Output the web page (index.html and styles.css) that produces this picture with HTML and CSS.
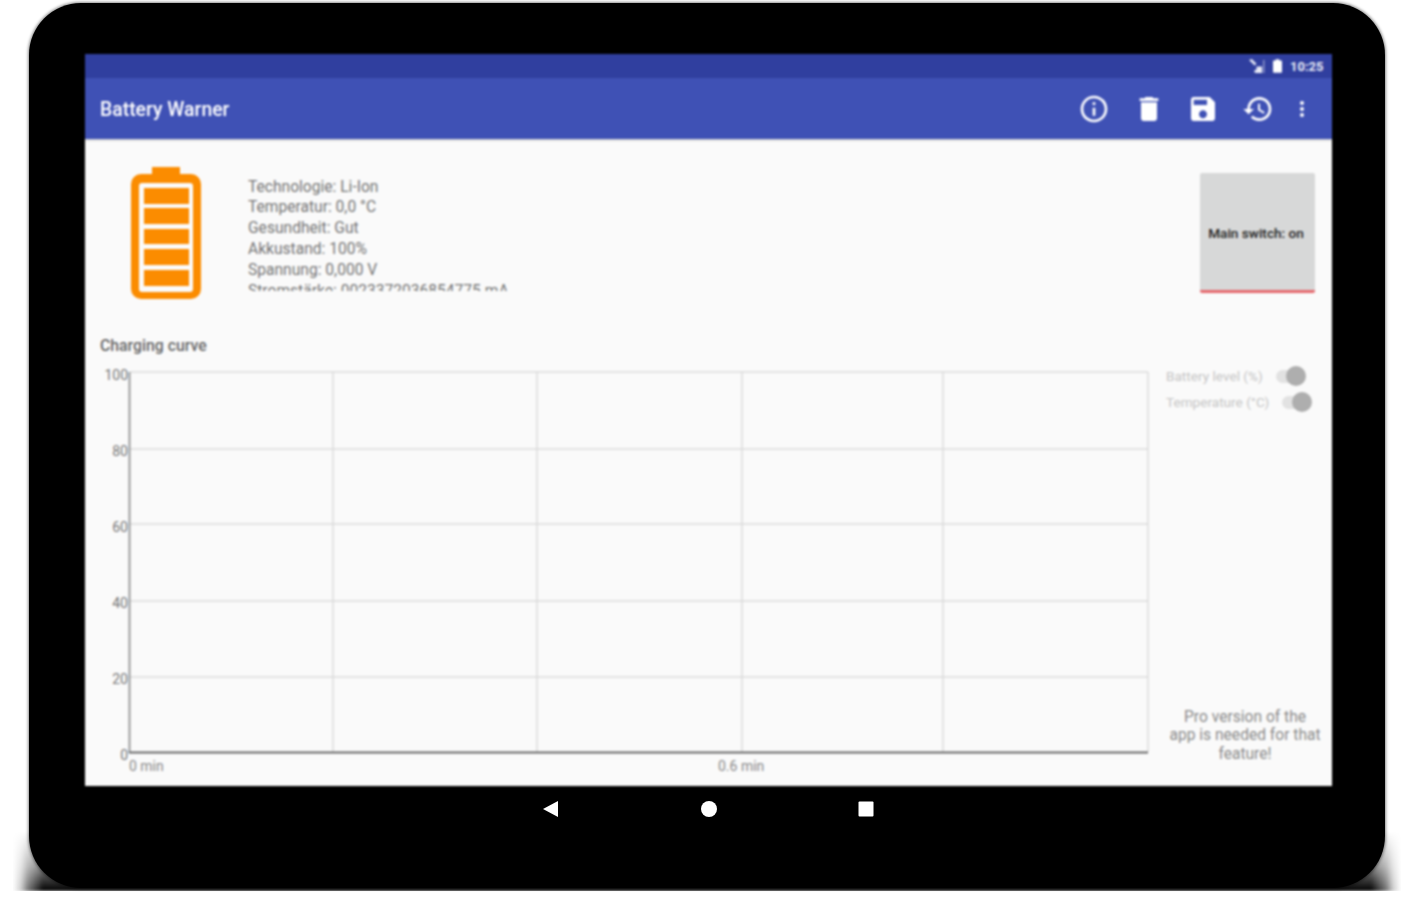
FILE: index.html
```html
<!DOCTYPE html>
<html lang="de">
<head>
<meta charset="utf-8">
<title>Battery Warner</title>
<link rel="stylesheet" href="styles.css">
</head>
<body>
<div class="tablet">
  <div class="screen">
    <div class="statusbar">
      <svg class="st-signal" viewBox="0 0 18 16"><path d="M1 1l3-1 5 5-2 2zM9 8l6 0 0 7-7 0-2-2 3-2z"/><path d="M16 1h1.500v14H16z" opacity=".55"/></svg>
      <svg class="st-battery" viewBox="0 0 10 15"><path d="M3 0h4v1.500h2a1 1 0 0 1 1 1V14a1 1 0 0 1-1 1H1a1 1 0 0 1-1-1V2.500a1 1 0 0 1 1-1h2z"/></svg>
      <span class="st-time">10:25</span>
    </div>
    <header class="toolbar">
      <h1 class="title">Battery Warner</h1>
      <div class="actions">
        <svg class="icon" viewBox="0 0 24 24"><path d="M11 7h2v2h-2zm0 4h2v6h-2zm1-9C6.480 2 2 6.480 2 12s4.480 10 10 10 10-4.480 10-10S17.520 2 12 2zm0 18c-4.410 0-8-3.590-8-8s3.590-8 8-8 8 3.590 8 8-3.590 8-8 8z"/></svg>
        <svg class="icon" viewBox="0 0 24 24"><path d="M6 19c0 1.100.9 2 2 2h8c1.100 0 2-.9 2-2V7H6v12zM19 4h-3.500l-1-1h-5l-1 1H5v2h14V4z"/></svg>
        <svg class="icon" viewBox="0 0 24 24"><path d="M17 3H5c-1.110 0-2 .9-2 2v14c0 1.100.89 2 2 2h14c1.100 0 2-.9 2-2V7l-4-4zm-5 16c-1.660 0-3-1.340-3-3s1.340-3 3-3 3 1.340 3 3-1.340 3-3 3zm3-10H5V5h10v4z"/></svg>
        <svg class="icon" viewBox="0 0 24 24"><path d="M13 3c-4.970 0-9 4.030-9 9H1l3.890 3.890.07.14L9 12H6c0-3.870 3.130-7 7-7s7 3.130 7 7-3.130 7-7 7c-1.930 0-3.680-.79-4.940-2.060l-1.420 1.420C8.270 19.990 10.510 21 13 21c4.970 0 9-4.030 9-9s-4.030-9-9-9zm-1 5v5l4.280 2.540.72-1.210-3.500-2.080V8H12z"/></svg>
        <svg class="icon icon-more" viewBox="0 0 24 24"><path d="M12 8c1.100 0 2-.9 2-2s-.9-2-2-2-2 .9-2 2 .9 2 2 2zm0 2c-1.100 0-2 .9-2 2s.9 2 2 2 2-.9 2-2-.9-2-2-2zm0 6c-1.100 0-2 .9-2 2s.9 2 2 2 2-.9 2-2-.9-2-2-2z"/></svg>
      </div>
    </header>
    <main class="content">
      <section class="top">
        <svg class="battery" viewBox="0 0 70 132">
          <path class="b-orange" d="M21 0h28v7h11a10 10 0 0 1 10 10v105a10 10 0 0 1-10 10H10a10 10 0 0 1-10-10V17A10 10 0 0 1 10 7h11z"/>
          <rect class="b-inner" x="8" y="16" width="54" height="109" rx="3"/>
          <rect class="b-orange" x="13" y="21" width="45" height="16"/>
          <rect class="b-orange" x="13" y="41" width="45" height="16"/>
          <rect class="b-orange" x="13" y="62" width="45" height="15"/>
          <rect class="b-orange" x="13" y="82" width="45" height="16"/>
          <rect class="b-orange" x="13" y="103" width="45" height="16"/>
        </svg>
        <div class="info">
          <div>Technologie: Li-Ion</div>
          <div>Temperatur: 0,0 °C</div>
          <div>Gesundheit: Gut</div>
          <div>Akkustand: 100%</div>
          <div>Spannung: 0,000 V</div>
          <div>Stromstärke: 0023372036854775 mA</div>
        </div>
        <div class="main-switch">Main switch: on</div>
      </section>
      <h2 class="curve-title">Charging curve</h2>
      <section class="chart-row">
        <svg class="chart" viewBox="85 355 1065 431">
          <g class="grid">
            <path d="M130 372H1148M130 449H1148M130 524H1148M130 601H1148M130 677H1148"/>
            <path d="M333 372V752M537 372V752M742 372V752M943 372V752M1148 372V752"/>
          </g>
          <path class="axis-y" d="M129.500 372V753"/>
          <path class="axis-x" d="M129 752.500H1148"/>
          <g class="labels-y">
            <text x="128" y="380">100</text>
            <text x="128" y="456">80</text>
            <text x="128" y="532">60</text>
            <text x="128" y="608">40</text>
            <text x="128" y="684">20</text>
            <text x="128" y="760">0</text>
          </g>
          <g class="labels-x">
            <text x="129" y="771">0 min</text>
            <text x="718" y="771">0.6 min</text>
          </g>
        </svg>
        <aside class="side">
          <div class="toggles">
            <div class="toggle-row">
              <span>Battery level (%)</span>
              <span class="toggle"></span>
            </div>
            <div class="toggle-row">
              <span>Temperature (°C)</span>
              <span class="toggle"></span>
            </div>
          </div>
          <p class="pro">Pro version of the<br>app is needed for that<br>feature!</p>
        </aside>
      </section>
    </main>
  </div>
  <nav class="navbar">
    <svg class="nav-icon" viewBox="0 0 16 16"><path d="M15 0v16L0 8z"/></svg>
    <svg class="nav-icon" viewBox="0 0 16 16"><circle cx="8" cy="8" r="8"/></svg>
    <svg class="nav-icon" viewBox="0 0 16 16"><rect x="0.500" y="0.500" width="15" height="15" rx="1"/></svg>
  </nav>
</div>
</body>
</html>
```

FILE: styles.css
```css
* { box-sizing: border-box; }
html, body { margin: 0; padding: 0; }
body {
  width: 1413px;
  height: 900px;
  overflow: hidden;
  background: #fff;
  font-family: Roboto, "Liberation Sans", sans-serif;
  padding: 3px 0 0 29px;
}
.tablet {
  position: relative;
  width: 1356px;
  height: 885px;
  padding: 51px 53px 0 56px;
  background: #000;
  border-radius: 52px;
  box-shadow: 0 0 3px 1px rgba(0, 0, 0, .45);
}
.tablet::before {
  content: "";
  position: absolute;
  left: -16px;
  right: -16px;
  bottom: -3px;
  height: 60px;
  background: linear-gradient(90deg, transparent 0, rgba(0, 0, 0, .2) 8px, rgba(0, 0, 0, .55) 15px, #000 30px, #000 calc(100% - 30px), rgba(0, 0, 0, .55) calc(100% - 15px), rgba(0, 0, 0, .2) calc(100% - 8px), transparent 100%);
  -webkit-mask-image: linear-gradient(180deg, transparent 0, rgba(0, 0, 0, .5) 60%, #000 100%);
  mask-image: linear-gradient(180deg, transparent 0, rgba(0, 0, 0, .5) 60%, #000 100%);
  filter: blur(1.500px);
  z-index: -1;
}
.screen {
  width: 1247px;
  height: 732px;
  background: #fafafa;
  display: flex;
  flex-direction: column;
  filter: blur(.8px);
}
.statusbar {
  height: 24px;
  background: #303f9f;
  display: flex;
  align-items: center;
  justify-content: flex-end;
  padding-right: 9px;
  color: #fff;
}
.st-signal { width: 17px; height: 15px; fill: #e8eaf6; margin-right: 8px; }
.st-battery { width: 9px; height: 14px; fill: #fff; margin-right: 8px; }
.st-time { font-size: 13px; font-weight: 700; width: 33px; white-space: nowrap; color: #eceef8; }
.toolbar {
  height: 61px;
  background: #3f51b5;
  display: flex;
  align-items: center;
  justify-content: space-between;
  padding: 0 18px 0 15px;
  box-shadow: 0 1px 2px rgba(0, 0, 0, .25);
  position: relative;
}
.title { margin: 2px 0 0; font-size: 19.400px; font-weight: 500; color: #fff; }
.actions { display: flex; align-items: center; gap: 22.600px; }
.icon { width: 32px; height: 32px; fill: #fff; display: block; }
.icon-more { width: 24px; height: 24px; margin-left: -6.600px; }
.content { flex: 1; display: flex; flex-direction: column; min-height: 0; }
.top { display: flex; align-items: flex-start; padding: 28px 17px 0 46px; }
.battery { width: 70px; height: 132px; flex: none; display: block; }
.b-orange { fill: #fb8c00; }
.b-inner { fill: #fbfbfb; }
.info {
  margin: 9.500px 0 0 47px;
  height: 114px;
  overflow: hidden;
  flex: 1;
  font-size: 15.600px;
  line-height: 20.900px;
  color: #757575;
}
.main-switch {
  width: 115px;
  height: 120px;
  margin-top: 6px;
  padding: 3px 3px 0 0;
  background: #d7d8d8;
  border-bottom: 3px solid #e5676c;
  border-radius: 2px;
  display: flex;
  align-items: center;
  justify-content: center;
  font-size: 13.600px;
  font-weight: 500;
  color: #222;
  white-space: nowrap;
}
.curve-title {
  margin: 37px 0 0 15px;
  height: 20px;
  font-size: 15.800px;
  line-height: 20px;
  font-weight: 500;
  color: #666;
}
.chart-row { flex: 1; display: flex; min-height: 0; margin-top: -1px; }
.chart { width: 1065px; height: 431px; flex: none; display: block; }
.grid path { fill: none; stroke: #dcdcdc; stroke-width: 1.500; }
.axis-y { fill: none; stroke: #999; stroke-width: 2; }
.axis-x { fill: none; stroke: #666; stroke-width: 2; }
.labels-y text { font-size: 14px; fill: #777; text-anchor: end; }
.labels-x text { font-size: 14px; fill: #888; }
.side { flex: 1; display: flex; flex-direction: column; justify-content: space-between; padding: 8px 0 23px 16px; }
.toggles { display: flex; flex-direction: column; }
.toggle-row {
  display: flex;
  align-items: center;
  height: 26px;
  font-size: 13.600px;
  color: #c4c4c4;
  white-space: nowrap;
}
.toggle {
  position: relative;
  width: 24px;
  height: 13px;
  margin-left: 13px;
  border-radius: 7px;
  background: #e2e2e2;
}
.toggle::after {
  content: "";
  position: absolute;
  right: -6px;
  top: -3.500px;
  width: 20px;
  height: 20px;
  border-radius: 50%;
  background: #aeaeae;
}
.pro {
  margin: 0 0 0 -1px;
  width: 160px;
  text-align: center;
  font-size: 15.600px;
  line-height: 18.500px;
  color: #8a8a8a;
  white-space: nowrap;
}
.navbar {
  display: flex;
  justify-content: center;
  gap: 141.500px;
  padding: 15px 0 0;
  width: 1247px;
}
.nav-icon { width: 16px; height: 16px; fill: #fff; display: block; filter: blur(.6px); }
```
